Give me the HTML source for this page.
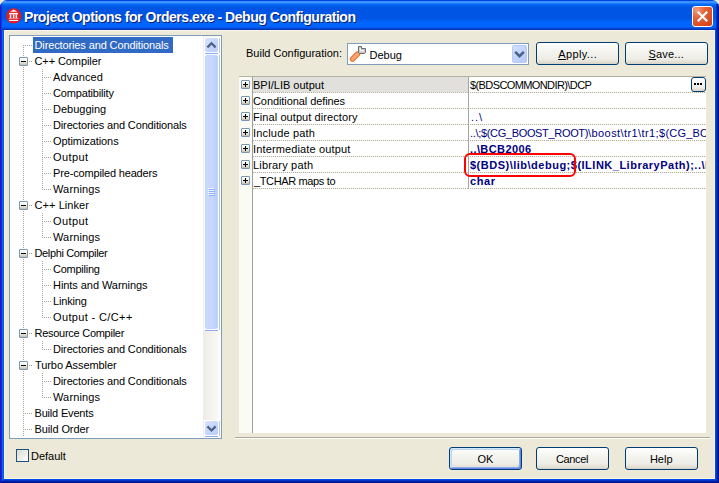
<!DOCTYPE html><html><head><meta charset="utf-8"><style>
*{margin:0;padding:0;box-sizing:border-box}
html,body{width:719px;height:483px;overflow:hidden;background:#ECE9D8;font-family:"Liberation Sans",sans-serif;font-size:11px;color:#000}
.a{position:absolute}
.t{position:absolute;white-space:nowrap;line-height:16px;height:16px}
.win{position:absolute;left:0;top:0;width:719px;height:483px;border-radius:7px 7px 0 0;overflow:hidden;background:#ECE9D8}
.btn{position:absolute;border:1px solid #003C74;border-radius:3px;background:linear-gradient(180deg,#FFFFFF 0%,#F6F6F2 30%,#EEEDE6 75%,#E3E0D5 90%,#D6D0C5 100%);text-align:center;line-height:22px;font-size:11px}
.dots{position:absolute;height:1px;background-image:linear-gradient(90deg,#A8A493 50%,transparent 50%);background-size:2px 1px}
.vdots{position:absolute;width:1px;background-image:linear-gradient(180deg,#A8A493 50%,transparent 50%);background-size:1px 2px}
.box{position:absolute;width:9px;height:9px;border:1px solid #7898B5;border-radius:1px;background:linear-gradient(180deg,#FFFFFF 0%,#F2F0EA 50%,#C6BFAE 100%)}
.box:before{content:"";position:absolute;left:1px;top:3px;width:5px;height:1px;background:#000}
.plus:after{content:"";position:absolute;left:3px;top:1px;width:1px;height:5px;background:#000}
</style></head><body><div class="win"><div class="a" style="left:0;top:0;width:719px;height:30px;background:linear-gradient(180deg,#0046D8 0px,#0046D8 1px,#3A8EFF 1px,#3A8EFF 2px,#3D95FF 2px,#3D95FF 3px,#1A7BFA 3px,#1A7BFA 4px,#0A6AF5 4px,#0A6AF5 5px,#0260EE 5px,#0260EE 6px,#0058E6 6px,#0058E6 7px,#0055E5 7px,#0055E5 8px,#0055E5 8px,#0055E5 9px,#0055E5 9px,#0055E5 10px,#0055E5 10px,#0055E5 11px,#0055E5 11px,#0055E5 12px,#0055E5 12px,#0055E5 13px,#0055E5 13px,#0055E5 14px,#0055E5 14px,#0055E5 15px,#0055E5 15px,#0055E5 16px,#0055E5 16px,#0055E5 17px,#0055E5 17px,#0055E5 18px,#0055E5 18px,#0055E5 19px,#005AEB 19px,#005AEB 20px,#005EF0 20px,#005EF0 21px,#0062F5 21px,#0062F5 22px,#0066FF 22px,#0066FF 23px,#0066FF 23px,#0066FF 24px,#0066FF 24px,#0066FF 25px,#0066FF 25px,#0066FF 26px,#0062FA 26px,#0062FA 27px,#005AF0 27px,#005AF0 28px,#0046D4 28px,#0046D4 29px,#0034B8 29px,#0034B8 30px)"></div><div class="a" style="left:0;top:4px;width:2px;height:26px;background:linear-gradient(90deg,#1A1ACD 0px,#1A1ACD 1px,#0E3ADD 1px)"></div><div class="a" style="left:716px;top:4px;width:3px;height:26px;background:linear-gradient(90deg,#0036D0 0px,#0036D0 1px,#001EA0 1px,#001EA0 2px,#00138C 2px)"></div><div class="a" style="left:0px;top:30px;width:719px;height:453px;border-left:1px solid #1A1ACD;border-right:1px solid #00138C;border-bottom:1px solid #00138C"></div><div class="a" style="left:1px;top:30px;width:717px;height:452px;border-left:1px solid #1A22D8;border-right:1px solid #001EA0;border-bottom:1px solid #001EA0"></div><div class="a" style="left:2px;top:30px;width:715px;height:451px;border-left:1px solid #1766F0;border-right:1px solid #0036D0;border-bottom:1px solid #0036D0"></div><div class="a" style="left:3px;top:30px;width:713px;height:450px;border-left:1px solid #0058E6;border-right:1px solid #0048F0;border-bottom:1px solid #0048F0"></div><div class="a" style="left:4px;top:30px;width:711px;height:449px;background:#ECE9D8;border:1px solid #FBF5DE;border-top-color:#FDF8E4"></div><svg class="a" style="left:6px;top:8px" width="16" height="16" viewBox="0 0 16 16"><circle cx="7.75" cy="7.95" r="7.6" fill="#E8191C"/><path d="M7.7 1.4 L11.4 3.8 H4.0 Z" fill="#fff"/><rect x="3" y="4.9" width="9" height="1.4" fill="#fff"/><rect x="3.8" y="6.3" width="1.5" height="4" fill="#fff"/><rect x="6.9" y="6.3" width="1.5" height="4" fill="#fff"/><rect x="9.6" y="6.3" width="1.5" height="4" fill="#fff"/><rect x="2.5" y="10.1" width="10" height="0.7" fill="#F8B0B0"/><rect x="3" y="11.9" width="9" height="1.1" fill="#fff"/></svg><div class="t" style="left:25px;top:10px;font-size:14px;letter-spacing:-0.46px;font-weight:bold;color:#0A1E6E;line-height:16px">Project Options for Orders.exe - Debug Configuration</div><div class="t" style="left:24px;top:9px;font-size:14px;letter-spacing:-0.46px;font-weight:bold;color:#FFFFFF;line-height:16px">Project Options for Orders.exe - Debug Configuration</div><div class="a" style="left:692px;top:6px;width:21px;height:21px;border:1px solid #FFFFFF;border-radius:3px;background:radial-gradient(circle at 20% 15%,#F39C7E 0%,#E5643C 35%,#D9481C 80%,#C73E16 100%)"></div><svg class="a" style="left:692px;top:6px" width="21" height="21" viewBox="0 0 21 21"><path d="M5.8 5.8 L15.2 15.2 M15.2 5.8 L5.8 15.2" stroke="#fff" stroke-width="2.3"/></svg><div class="a" style="left:9px;top:35px;width:213px;height:404px;border:1px solid #7F9DB9;background:#fff"></div><div class="vdots" style="left:23px;top:45px;height:392px"></div><div class="vdots" style="left:42px;top:69px;height:121px"></div><div class="vdots" style="left:42px;top:213px;height:25px"></div><div class="vdots" style="left:42px;top:261px;height:57px"></div><div class="vdots" style="left:42px;top:341px;height:9px"></div><div class="vdots" style="left:42px;top:373px;height:25px"></div><div class="dots" style="left:25px;top:45px;width:7px"></div><div class="a" style="left:33px;top:37px;width:140px;height:16px;background:#316AC5"></div><div class="t" style="left:34.5px;top:37px;color:#fff;letter-spacing:-0.12px">Directories and Conditionals</div><div class="dots" style="left:25px;top:61px;width:7px"></div><div class="box" style="left:19px;top:57px"></div><div class="t" style="left:34.5px;top:53px;letter-spacing:-0.09px">C++ Compiler</div><div class="dots" style="left:44px;top:77px;width:7px"></div><div class="t" style="left:53px;top:69px;letter-spacing:0.147px">Advanced</div><div class="dots" style="left:44px;top:93px;width:7px"></div><div class="t" style="left:53px;top:85px;letter-spacing:-0.163px">Compatibility</div><div class="dots" style="left:44px;top:109px;width:7px"></div><div class="t" style="left:53px;top:101px;letter-spacing:-0.005px">Debugging</div><div class="dots" style="left:44px;top:125px;width:7px"></div><div class="t" style="left:53px;top:117px;letter-spacing:-0.137px">Directories and Conditionals</div><div class="dots" style="left:44px;top:141px;width:7px"></div><div class="t" style="left:53px;top:133px;letter-spacing:-0.083px">Optimizations</div><div class="dots" style="left:44px;top:157px;width:7px"></div><div class="t" style="left:53px;top:149px;letter-spacing:0.4px">Output</div><div class="dots" style="left:44px;top:173px;width:7px"></div><div class="t" style="left:53px;top:165px;letter-spacing:-0.163px">Pre-compiled headers</div><div class="dots" style="left:44px;top:189px;width:7px"></div><div class="t" style="left:53px;top:181px;letter-spacing:0.147px">Warnings</div><div class="dots" style="left:25px;top:205px;width:7px"></div><div class="box" style="left:19px;top:201px"></div><div class="t" style="left:34.5px;top:197px;letter-spacing:0.07px">C++ Linker</div><div class="dots" style="left:44px;top:221px;width:7px"></div><div class="t" style="left:53px;top:213px;letter-spacing:0.4px">Output</div><div class="dots" style="left:44px;top:237px;width:7px"></div><div class="t" style="left:53px;top:229px;letter-spacing:0.147px">Warnings</div><div class="dots" style="left:25px;top:253px;width:7px"></div><div class="box" style="left:19px;top:249px"></div><div class="t" style="left:34.5px;top:245px;letter-spacing:-0.36px">Delphi Compiler</div><div class="dots" style="left:44px;top:269px;width:7px"></div><div class="t" style="left:53px;top:261px;letter-spacing:-0.245px">Compiling</div><div class="dots" style="left:44px;top:285px;width:7px"></div><div class="t" style="left:53px;top:277px;letter-spacing:-0.059px">Hints and Warnings</div><div class="dots" style="left:44px;top:301px;width:7px"></div><div class="t" style="left:53px;top:293px;letter-spacing:-0.167px">Linking</div><div class="dots" style="left:44px;top:317px;width:7px"></div><div class="t" style="left:53px;top:309px;letter-spacing:0.363px">Output - C/C++</div><div class="dots" style="left:25px;top:333px;width:7px"></div><div class="box" style="left:19px;top:329px"></div><div class="t" style="left:34.5px;top:325px;letter-spacing:-0.27px">Resource Compiler</div><div class="dots" style="left:44px;top:349px;width:7px"></div><div class="t" style="left:53px;top:341px;letter-spacing:-0.137px">Directories and Conditionals</div><div class="dots" style="left:25px;top:365px;width:7px"></div><div class="box" style="left:19px;top:361px"></div><div class="t" style="left:35px;top:357px;letter-spacing:-0.08px">Turbo Assembler</div><div class="dots" style="left:44px;top:381px;width:7px"></div><div class="t" style="left:53px;top:373px;letter-spacing:-0.137px">Directories and Conditionals</div><div class="dots" style="left:44px;top:397px;width:7px"></div><div class="t" style="left:53px;top:389px;letter-spacing:0.147px">Warnings</div><div class="dots" style="left:25px;top:413px;width:7px"></div><div class="t" style="left:34.5px;top:405px;letter-spacing:-0.18px">Build Events</div><div class="dots" style="left:25px;top:429px;width:7px"></div><div class="t" style="left:34.5px;top:421px;letter-spacing:-0.1px">Build Order</div><div class="a" style="left:203px;top:36px;width:1px;height:402px;background:#EEEDE7"></div><div class="a" style="left:204px;top:36px;width:17px;height:402px;background:linear-gradient(90deg,#EEEDE5 0%,#F3F2EC 40%,#FBFBF8 94%,#FFFFFF 94%)"></div><div class="a" style="left:204px;top:37px;width:17px;height:18px;background:#FDFDFB"></div><div class="a" style="left:205px;top:53px;width:13px;height:1px;background:#8EA9EC"></div><div class="a" style="left:219px;top:38px;width:1px;height:15px;background:#BCC8E4"></div><div class="a" style="left:205px;top:38px;width:13px;height:14px;border-radius:2px;background:linear-gradient(135deg,#DAE4FE 0%,#C8D7FD 45%,#B9CCFB 100%)"></div><svg class="a" style="left:204px;top:37px" width="17" height="18"><path d="M3.4 10.4 L7.5 6.3 L11.6 10.4" fill="none" stroke="#4D6185" stroke-width="2.2"/></svg><div class="a" style="left:204px;top:420px;width:17px;height:18px;background:#FDFDFB"></div><div class="a" style="left:205px;top:436px;width:13px;height:1px;background:#8EA9EC"></div><div class="a" style="left:219px;top:421px;width:1px;height:15px;background:#BCC8E4"></div><div class="a" style="left:205px;top:421px;width:13px;height:14px;border-radius:2px;background:linear-gradient(135deg,#DAE4FE 0%,#C8D7FD 45%,#B9CCFB 100%)"></div><svg class="a" style="left:204px;top:420px" width="17" height="18"><path d="M3.4 6.4 L7.5 10.5 L11.6 6.4" fill="none" stroke="#4D6185" stroke-width="2.2"/></svg><div class="a" style="left:204px;top:54px;width:17px;height:277px;background:#FDFDFB"></div><div class="a" style="left:205px;top:330px;width:13px;height:1px;background:#8EA9EC"></div><div class="a" style="left:219px;top:55px;width:1px;height:275px;background:#BCC8E4"></div><div class="a" style="left:220px;top:54px;width:1px;height:277px;background:#FFFFFF"></div><div class="a" style="left:205px;top:55px;width:13px;height:274px;border:1px solid #C3D3FD;border-radius:2px;background:linear-gradient(90deg,#C9D8FC 0%,#C6D6FC 60%,#B9CEFA 100%)"></div><div class="a" style="left:208px;top:188px;width:6px;height:1px;background:#EEF4FE"></div><div class="a" style="left:209px;top:189px;width:6px;height:1px;background:#8CB0F8"></div><div class="a" style="left:208px;top:190px;width:6px;height:1px;background:#EEF4FE"></div><div class="a" style="left:209px;top:191px;width:6px;height:1px;background:#8CB0F8"></div><div class="a" style="left:208px;top:192px;width:6px;height:1px;background:#EEF4FE"></div><div class="a" style="left:209px;top:193px;width:6px;height:1px;background:#8CB0F8"></div><div class="a" style="left:208px;top:194px;width:6px;height:1px;background:#EEF4FE"></div><div class="a" style="left:209px;top:195px;width:6px;height:1px;background:#8CB0F8"></div><div class="t" style="left:246px;top:45px">Build Configuration:</div><div class="a" style="left:347px;top:43px;width:182px;height:22px;border:1px solid #7F9DB9;background:#fff"></div><svg class="a" style="left:348px;top:44px" width="18" height="18" viewBox="0 0 18 18"><path d="M9 8 L12 8 L12 11 L9 11 Z" fill="#B9C3CB"/><path d="M4.5 15.1 L9.4 10.2" stroke="#EC6A1C" stroke-width="5.4" stroke-linecap="round"/><path d="M4.5 15.1 L9.4 10.2" stroke="#F9A472" stroke-width="3.4" stroke-linecap="round"/><path d="M10.5 2.5 H13.5 V4.5 H17.5 V8.5 L16.5 9.5 H11.5 L10.5 8.5 Z" fill="#C9C9C9" stroke="#6A6A6A" stroke-width="1"/><path d="M11.5 4 H13 V6 H16 V7.5 H12 Z" fill="#EDEDED"/></svg><div class="t" style="left:369.5px;top:47px">Debug</div><div class="a" style="left:512px;top:45px;width:15px;height:18px;border:1px solid #B6CAF9;border-radius:2px;background:linear-gradient(135deg,#D4E0FD 0%,#C6D5FD 40%,#B5C9FB 100%)"></div><svg class="a" style="left:512px;top:45px" width="15" height="18"><path d="M3.2 6.9 L7.5 11.2 L11.8 6.9" fill="none" stroke="#4D6185" stroke-width="2.6"/></svg><div class="btn" style="left:536px;top:42px;width:83px;height:23px;letter-spacing:0.4px;text-indent:0.4px"><span style="text-decoration:underline">A</span>pply...</div><div class="btn" style="left:625px;top:42px;width:83px;height:23px;letter-spacing:0.15px;text-indent:-0.5px"><span style="text-decoration:underline">S</span>ave...</div><div class="a" style="left:239px;top:76px;width:467px;height:357px;background:#FFFFFF;border-top:1px solid #B4B1A3"></div><div class="a" style="left:239px;top:77px;width:13px;height:356px;background:#FBFBF5"></div><div class="a" style="left:252px;top:77px;width:1px;height:356px;background:#A0A09A"></div><div class="a" style="left:253px;top:77px;width:215px;height:15px;background:#E1E0DC"></div><div class="a" style="left:468px;top:77px;width:1px;height:112px;background:#A7A69E"></div><div class="box plus" style="left:241px;top:80px"></div><div class="t" style="left:253px;top:77px;letter-spacing:0px">BPI/LIB output</div><div class="a" style="left:469px;top:77px;width:237px;height:16px;overflow:hidden"><div class="t" style="left:1px;top:0;color:#000;letter-spacing:-0.6px">$(BDSCOMMONDIR)\DCP</div></div><div class="a" style="left:253px;top:92px;width:215px;height:1px;background-color:#F1EFE6;background-image:linear-gradient(90deg,#B5B1A2 50%,transparent 50%);background-size:2px 1px"></div><div class="a" style="left:470px;top:92px;width:236px;height:1px;background-color:#F1EFE6;background-image:linear-gradient(90deg,#B5B1A2 50%,transparent 50%);background-size:2px 1px"></div><div class="box plus" style="left:241px;top:96px"></div><div class="t" style="left:253px;top:93px;letter-spacing:-0.08px">Conditional defines</div><div class="a" style="left:253px;top:108px;width:215px;height:1px;background-color:#F1EFE6;background-image:linear-gradient(90deg,#B5B1A2 50%,transparent 50%);background-size:2px 1px"></div><div class="a" style="left:470px;top:108px;width:236px;height:1px;background-color:#F1EFE6;background-image:linear-gradient(90deg,#B5B1A2 50%,transparent 50%);background-size:2px 1px"></div><div class="box plus" style="left:241px;top:112px"></div><div class="t" style="left:253px;top:109px;letter-spacing:0.08px">Final output directory</div><div class="a" style="left:469px;top:109px;width:237px;height:16px;overflow:hidden"><div class="t" style="left:1px;top:0;color:#000080;letter-spacing:0px"><span style="margin-left:1px;letter-spacing:1px">..\</span></div></div><div class="a" style="left:253px;top:124px;width:215px;height:1px;background-color:#F1EFE6;background-image:linear-gradient(90deg,#B5B1A2 50%,transparent 50%);background-size:2px 1px"></div><div class="a" style="left:470px;top:124px;width:236px;height:1px;background-color:#F1EFE6;background-image:linear-gradient(90deg,#B5B1A2 50%,transparent 50%);background-size:2px 1px"></div><div class="box plus" style="left:241px;top:128px"></div><div class="t" style="left:253px;top:125px;letter-spacing:0.18px">Include path</div><div class="a" style="left:469px;top:125px;width:237px;height:16px;overflow:hidden"><div class="t" style="left:1px;top:0;color:#000080;letter-spacing:0px"><span style="letter-spacing:-0.33px">..\;$(CG_BOOST_ROOT)</span><span style="letter-spacing:0.41px">\boost\tr1\tr1;</span><span style="letter-spacing:0.2px">$(CG_BOOST_ROOT)\boost</span></div></div><div class="a" style="left:253px;top:140px;width:215px;height:1px;background-color:#F1EFE6;background-image:linear-gradient(90deg,#B5B1A2 50%,transparent 50%);background-size:2px 1px"></div><div class="a" style="left:470px;top:140px;width:236px;height:1px;background-color:#F1EFE6;background-image:linear-gradient(90deg,#B5B1A2 50%,transparent 50%);background-size:2px 1px"></div><div class="box plus" style="left:241px;top:144px"></div><div class="t" style="left:253px;top:141px;letter-spacing:0.14px">Intermediate output</div><div class="a" style="left:469px;top:141px;width:237px;height:16px;overflow:hidden"><div class="t" style="left:1px;top:0;color:#000080;font-weight:bold;letter-spacing:0.4px">..\BCB2006</div></div><div class="a" style="left:253px;top:156px;width:215px;height:1px;background-color:#F1EFE6;background-image:linear-gradient(90deg,#B5B1A2 50%,transparent 50%);background-size:2px 1px"></div><div class="a" style="left:470px;top:156px;width:236px;height:1px;background-color:#F1EFE6;background-image:linear-gradient(90deg,#B5B1A2 50%,transparent 50%);background-size:2px 1px"></div><div class="box plus" style="left:241px;top:160px"></div><div class="t" style="left:253px;top:157px;letter-spacing:0.18px">Library path</div><div class="a" style="left:469px;top:157px;width:237px;height:16px;overflow:hidden"><div class="t" style="left:1px;top:0;color:#000080;font-weight:bold;letter-spacing:0.5px">$(BDS)\lib\debug;$(ILINK_LibraryPath);..\lib</div></div><div class="a" style="left:253px;top:172px;width:215px;height:1px;background-color:#F1EFE6;background-image:linear-gradient(90deg,#B5B1A2 50%,transparent 50%);background-size:2px 1px"></div><div class="a" style="left:470px;top:172px;width:236px;height:1px;background-color:#F1EFE6;background-image:linear-gradient(90deg,#B5B1A2 50%,transparent 50%);background-size:2px 1px"></div><div class="box plus" style="left:241px;top:176px"></div><div class="t" style="left:254px;top:173px;letter-spacing:-0.36px">_TCHAR maps to</div><div class="a" style="left:469px;top:173px;width:237px;height:16px;overflow:hidden"><div class="t" style="left:1px;top:0;color:#000080;font-weight:bold;letter-spacing:0.6px">char</div></div><div class="a" style="left:253px;top:188px;width:215px;height:1px;background-color:#F1EFE6;background-image:linear-gradient(90deg,#B5B1A2 50%,transparent 50%);background-size:2px 1px"></div><div class="a" style="left:470px;top:188px;width:236px;height:1px;background-color:#F1EFE6;background-image:linear-gradient(90deg,#B5B1A2 50%,transparent 50%);background-size:2px 1px"></div><div class="a" style="left:691px;top:77px;width:15px;height:15px;border:1px solid #003C74;border-radius:3px;background:linear-gradient(180deg,#FFFFFF 0%,#F0F0EA 70%,#D8D3C8 100%)"></div><div class="a" style="left:694px;top:83px;width:2px;height:2px;background:#000"></div><div class="a" style="left:697px;top:83px;width:2px;height:2px;background:#000"></div><div class="a" style="left:700px;top:83px;width:2px;height:2px;background:#000"></div><div class="a" style="left:464px;top:153px;width:112px;height:24px;border:2px solid #FF0000;border-radius:6px"></div><div class="a" style="left:235px;top:437px;width:475px;height:1px;background:#ACA899"></div><div class="a" style="left:235px;top:438px;width:475px;height:1px;background:#FFFFFF"></div><div class="a" style="left:16px;top:449px;width:13px;height:13px;border:1px solid #1C5180;background:linear-gradient(135deg,#DCDCD7 0%,#F0F0EA 60%,#FFFFFF 100%)"></div><div class="t" style="left:31px;top:448px">Default</div><div class="btn" style="left:449px;top:447px;width:73px;height:23px;box-shadow:inset 1px 1px #CEE7FF, inset -1px -1px #6982EE, inset 2px 2px #BCD4F6, inset -2px -2px #89ADE4">OK</div><div class="btn" style="left:536px;top:447px;width:73px;height:23px;letter-spacing:-0.35px;text-indent:-1px">Cancel</div><div class="btn" style="left:625px;top:447px;width:73px;height:23px;text-indent:-0.6px">Help</div></div></body></html>
